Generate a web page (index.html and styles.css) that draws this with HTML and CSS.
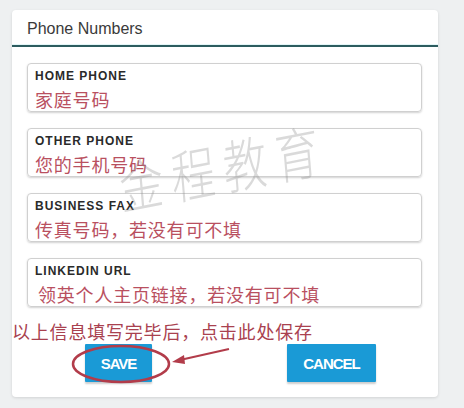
FILE: index.html
```html
<!DOCTYPE html>
<html lang="zh">
<head>
<meta charset="utf-8">
<link rel="stylesheet" href="styles.css">
</head>
<body>
<div class="card">
  <div class="card-header">Phone Numbers</div>
  <div class="fields">
    <div class="field">
      <div class="label">HOME PHONE</div>
      <div class="value">家庭号码</div>
    </div>
    <div class="field">
      <div class="label">OTHER PHONE</div>
      <div class="value">您的手机号码</div>
    </div>
    <div class="field">
      <div class="label">BUSINESS FAX</div>
      <div class="value">传真号码，若没有可不填</div>
    </div>
    <div class="field">
      <div class="label">LINKEDIN URL</div>
      <div class="value value-indent">领英个人主页链接，若没有可不填</div>
    </div>
  </div>
  <div class="actions">
    <button class="btn">SAVE</button>
    <button class="btn">CANCEL</button>
  </div>
</div>
<div class="watermark">金程教育</div>
<div class="note">以上信息填写完毕后，点击此处保存</div>
<svg class="annot" width="464" height="408" viewBox="0 0 464 408">
  <ellipse cx="121" cy="364" rx="48" ry="18" fill="none" stroke="#b23c4a" stroke-width="2.5"/>
  <line x1="229" y1="349" x2="180" y2="360" stroke="#b23c4a" stroke-width="2"/>
  <polygon points="172,362 184,355 185,364" fill="#b23c4a"/>
</svg>
</body>
</html>
```
FILE: styles.css
```css
html, body {
  margin: 0;
  padding: 0;
}
body {
  width: 464px;
  height: 408px;
  background: #eef0f1;
  font-family: "Liberation Sans", Arial, "Noto Sans CJK SC", sans-serif;
  position: relative;
  overflow: hidden;
}
.card {
  margin: 10px 0 0 12px;
  width: 426px;
  height: 387px;
  box-sizing: border-box;
  background: #fff;
  border-radius: 4px;
  box-shadow: 0 1px 3px rgba(0,0,0,0.12);
  display: flex;
  flex-direction: column;
}
.card-header {
  height: 33px;
  padding: 2px 0 0 15px;
  line-height: 33px;
  font-size: 16px;
  color: #3a3a3a;
  border-bottom: 2px solid #2d5c5f;
  box-shadow: 0 -1px 0 #e3f6f8 inset;
}
.fields {
  padding: 16px 16px 0 15px;
  display: flex;
  flex-direction: column;
  gap: 16px;
}
.field {
  height: 49px;
  box-sizing: border-box;
  border: 1px solid #d0d0d0;
  border-radius: 4px;
  box-shadow: 0 1px 2px rgba(0,0,0,0.18);
  padding: 5px 7px 0 7px;
}
.label {
  font-size: 12px;
  line-height: 14px;
  font-weight: bold;
  letter-spacing: 1px;
  color: #2a2a2a;
}
.value {
  margin-top: 5px;
  font-family: "Noto Sans CJK SC", sans-serif;
  font-size: 18px;
  line-height: 22px;
  letter-spacing: 0.8px;
  color: #b9505f;
}
.value-indent {
  padding-left: 3px;
}
.actions {
  margin-top: 37px;
  display: grid;
  grid-template-columns: 1fr 1fr;
  justify-items: center;
}
.btn {
  height: 38px;
  padding: 0 16px;
  border: none;
  border-radius: 1px;
  background: #1a9ad6;
  color: #fff;
  font-family: "Liberation Sans", Arial, sans-serif;
  font-weight: bold;
  font-size: 15px;
  letter-spacing: -1px;
  box-shadow: 0 2px 2px rgba(0,0,0,0.2);
}
.watermark {
  position: absolute;
  left: 223px;
  top: 166px;
  transform: translate(-50%, -50%) rotate(-11deg) scale(0.85, 1.1) skewX(-8deg);
  font-family: "Noto Sans CJK SC", sans-serif;
  font-weight: 300;
  font-size: 52px;
  line-height: 60px;
  letter-spacing: 10px;
  color: rgba(140,140,140,0.32);
  white-space: nowrap;
  pointer-events: none;
}
.note {
  position: absolute;
  left: 12px;
  top: 318px;
  font-family: "Noto Sans CJK SC", sans-serif;
  font-size: 18px;
  line-height: 26px;
  letter-spacing: 0.8px;
  color: #a9414f;
  white-space: nowrap;
}
.annot {
  position: absolute;
  left: 0;
  top: 0;
  pointer-events: none;
}
```
